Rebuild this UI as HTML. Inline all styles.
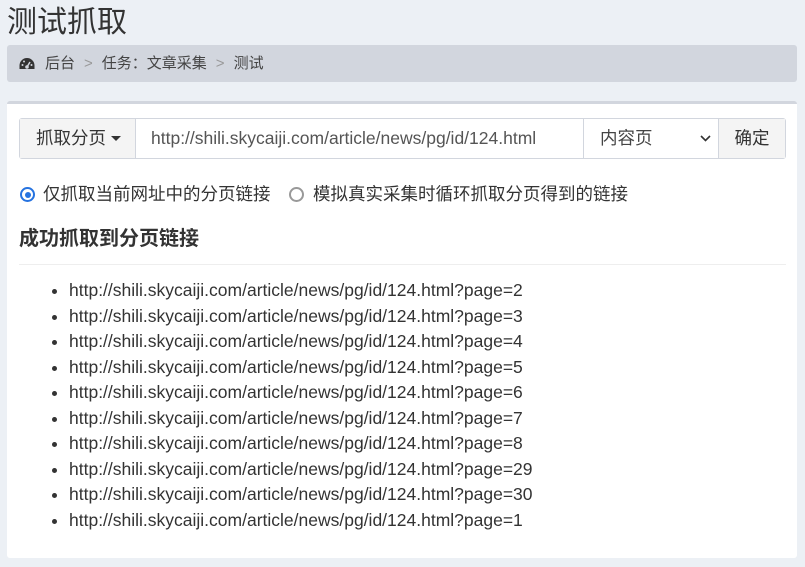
<!DOCTYPE html><html><head><meta charset="utf-8"><style>
*{box-sizing:border-box;margin:0;padding:0}
body{width:805px;height:567px;background:#ecf0f5;font-family:"Liberation Sans","Noto Sans CJK SC",sans-serif;color:#333;position:relative;overflow:hidden}
.a{position:absolute}
h1{position:absolute;left:7px;top:3px;font-size:30px;font-weight:normal;color:#333;line-height:40px}
.bc{left:7px;top:45px;width:790px;height:37px;background:#d2d6de;border-radius:3px;font-size:15px;line-height:37px;padding-left:12px;color:#444}
.bc .s{color:#999;margin:0 9px}
.box{left:7px;top:101px;width:790px;height:457px;background:#fff;border-top:3px solid #d2d6de;border-radius:3px}
.ig{left:19px;top:118px;height:41px;width:767px;border:1px solid #d2d6de;border-radius:3px;font-size:17.5px;line-height:39px}
.ig div{position:absolute;top:0;height:39px}
.r{font-size:17.5px;top:182px;line-height:24px}
ul{position:absolute;left:69px;top:278px;font-size:17.5px;line-height:25.5px;list-style:disc}
</style></head><body>
<h1>测试抓取</h1>
<div class="a bc"><svg width="16" height="13" viewBox="0 0 16 13" style="vertical-align:-2px;margin-right:10px"><path d="M8 1A7.5 7.5 0 0 0 .5 8.5V12h15V8.5A7.5 7.5 0 0 0 8 1z" fill="#333"/><circle cx="8" cy="10" r="1.8" fill="#d2d6de"/><path d="M8 10l3-5" stroke="#d2d6de" stroke-width="1.5"/><circle cx="3.5" cy="8" r="1" fill="#d2d6de"/><circle cx="5" cy="4.5" r="1" fill="#d2d6de"/><circle cx="12.5" cy="8" r="1" fill="#d2d6de"/></svg>后台<span class="s">&gt;</span>任务：文章采集<span class="s">&gt;</span>测试</div>
<div class="a box"></div>
<div class="a ig">
<div style="left:0;width:116px;background:#f4f4f4;border-right:1px solid #d2d6de;padding-left:16px">抓取分页 <span style="display:inline-block;border-top:5px solid #333;border-left:5px solid transparent;border-right:5px solid transparent;vertical-align:3px"></span></div>
<div style="left:131px;color:#555">http://shili.skycaiji.com/article/news/pg/id/124.html</div>
<div style="left:563px;width:136px;border-left:1px solid #d2d6de;border-right:1px solid #d2d6de;padding-left:16px;color:#444">内容页<svg class="a" style="left:116px;top:16px" width="11" height="8" viewBox="0 0 11 8"><path d="M1 1l4.5 4.5L10 1" stroke="#333" stroke-width="1.6" fill="none"/></svg></div>
<div style="left:699px;width:66px;background:#f4f4f4;text-align:center">确定</div>
</div>
<div class="a r" style="left:20px"><span style="display:inline-block;width:15px;height:15px;border:2px solid #2673e0;border-radius:50%;vertical-align:-2px;margin-right:8px;position:relative"><span style="position:absolute;left:2.5px;top:2.5px;width:6px;height:6px;background:#2673e0;border-radius:50%"></span></span>仅抓取当前网址中的分页链接</div>
<div class="a r" style="left:289px"><span style="display:inline-block;width:15px;height:15px;border:2px solid #999;border-radius:50%;vertical-align:-2px;margin-right:9px"></span>模拟真实采集时循环抓取分页得到的链接</div>
<div class="a" style="left:19px;top:226px;font-size:20px;font-weight:bold;line-height:26px">成功抓取到分页链接</div>
<div class="a" style="left:19px;top:264px;width:767px;height:1px;background:#eee"></div>
<ul>
<li>http://shili.skycaiji.com/article/news/pg/id/124.html?page=2</li>
<li>http://shili.skycaiji.com/article/news/pg/id/124.html?page=3</li>
<li>http://shili.skycaiji.com/article/news/pg/id/124.html?page=4</li>
<li>http://shili.skycaiji.com/article/news/pg/id/124.html?page=5</li>
<li>http://shili.skycaiji.com/article/news/pg/id/124.html?page=6</li>
<li>http://shili.skycaiji.com/article/news/pg/id/124.html?page=7</li>
<li>http://shili.skycaiji.com/article/news/pg/id/124.html?page=8</li>
<li>http://shili.skycaiji.com/article/news/pg/id/124.html?page=29</li>
<li>http://shili.skycaiji.com/article/news/pg/id/124.html?page=30</li>
<li>http://shili.skycaiji.com/article/news/pg/id/124.html?page=1</li>
</ul>
</body></html>
